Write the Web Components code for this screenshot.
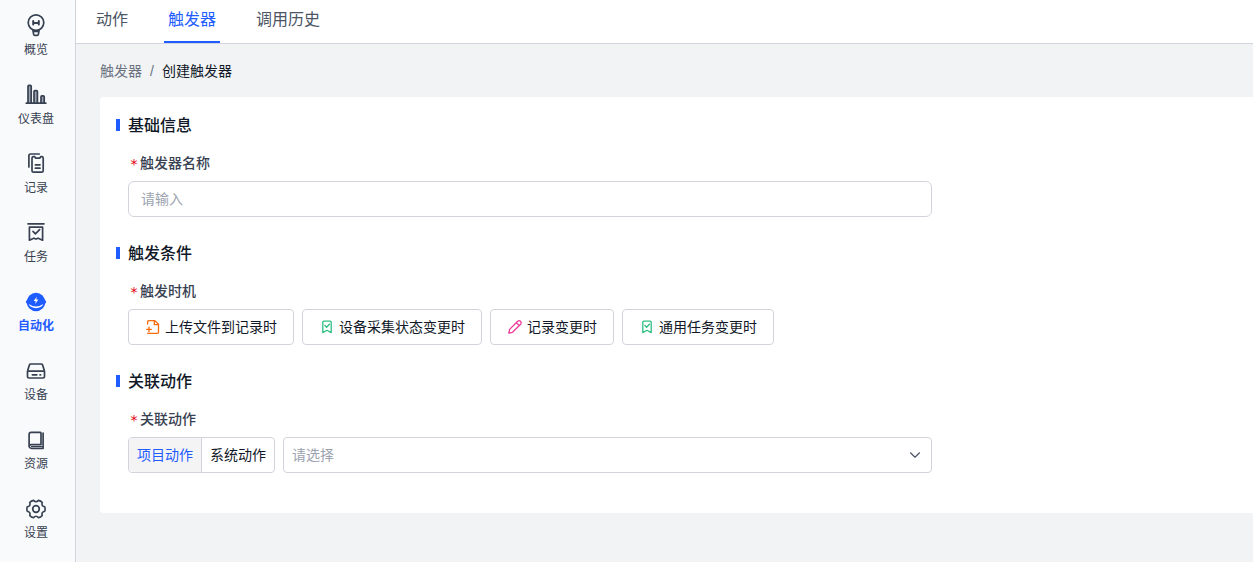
<!DOCTYPE html>
<html lang="zh-CN">
<head>
<meta charset="utf-8">
<title>创建触发器</title>
<style>
  html, body { height: 100%; margin: 0; }
  body {
    --blue: #1f5cff;
    --line: #d1d5db;
    --ink: #111827;
    --body: #374151;
    --muted: #6b7280;
    --hint: #9ca3af;
    --page: #f2f3f5;
    --display: Inter, "Noto Sans CJK SC", sans-serif;
    font: 14px/20px "Liberation Sans", "Noto Sans CJK SC", sans-serif;
    color: var(--ink);
    background: var(--page);
  }
</style>
</head>
<body>
<app-shell>
  <side-nav slot="nav">
    <nav-item icon="bulb">概览</nav-item>
    <nav-item icon="chart">仪表盘</nav-item>
    <nav-item icon="record">记录</nav-item>
    <nav-item icon="task">任务</nav-item>
    <nav-item icon="auto" active>自动化</nav-item>
    <nav-item icon="device">设备</nav-item>
    <nav-item icon="book">资源</nav-item>
    <nav-item icon="gear">设置</nav-item>
  </side-nav>
  <tab-bar slot="tabs">
    <tab-link>动作</tab-link>
    <tab-link active>触发器</tab-link>
    <tab-link>调用历史</tab-link>
  </tab-bar>
  <bread-crumb parent="触发器">创建触发器</bread-crumb>
  <form-card>
    <form-section heading="基础信息">
      <text-field label="触发器名称" placeholder="请输入"></text-field>
    </form-section>
    <form-section heading="触发条件">
      <field-group label="触发时机">
        <option-button icon="upload">上传文件到记录时</option-button>
        <option-button icon="mark">设备采集状态变更时</option-button>
        <option-button icon="pencil">记录变更时</option-button>
        <option-button icon="mark">通用任务变更时</option-button>
      </field-group>
    </form-section>
    <form-section heading="关联动作">
      <field-group label="关联动作">
        <segment-control options="项目动作,系统动作"></segment-control>
        <select-box placeholder="请选择" label="关联动作"></select-box>
      </field-group>
    </form-section>
  </form-card>
</app-shell>

<script>
const ICONS = {
  bulb: `<circle cx="12" cy="9.600" r="7.800"/><path d="M9 17.200l.6 4.100q.2 1 1.200 1h2.400q1 0 1.200-1l.6-4.100M9 18.400h6"/><path stroke-width="2" d="M9.200 8v3.400M14.800 8v3.400M9.200 9.900h5.600"/>`,
  chart: `<g fill="#9ca3af"><path d="M4 21V4.200q0-.9.900-.9h1.400q.9 0 .9.900V21M10 21V9.500q0-.9.900-.9h1.600q.9 0 .9.900V21M17 21v-6.300q0-.9.900-.9h1.400q.9 0 .9.900V21"/></g><path d="M2.300 21.200h19.500"/>`,
  record: `<path d="M4.900 16V4.700q0-1.700 1.700-1.700h8.600"/><path d="M8 7.300q0-1.600 1.500-1.600h1.200l.8 1.400h4.400l.8-1.400h1q1.500 0 1.500 1.600v12.400q0 1.500-1.500 1.500H9.500Q8 21.200 8 19.700zM11.400 13.800h4.600M11.400 17.200h4.600"/>`,
  task: `<path d="M4 3.800h16M5.400 7.200h13.200v13l-3.800-1.800q-.7-.4-1.400 0l-1.400.7-1.400-.7q-.7-.4-1.400 0l-3.800 1.800zM9 11.400l2.400 2.400 4.200-4.200"/>`,
  auto: `<g stroke="none"><circle cx="12" cy="13" r="9.200" fill="currentColor"/><path fill="currentColor" d="M4.500 9L2 12.200q-.3.600 0 1.200L4.500 17zM19.500 9l2.500 3.200q.3.600 0 1.200L19.500 17z"/><path fill="#fff" d="M4.800 15q7.200 5 14.400 0-.6 1.900-2.200 2.800-5 2.800-10 0Q5.400 16.900 4.800 15zM12.700 7.800l-3 4.100h2l-.5 3 3.200-4.300h-2.200z"/></g>`,
  device: `<path d="M6.700 6h10.600q1 0 1.300.9l1.700 5.600q.2.600.2 1.200v4.800q0 1.500-1.500 1.500H5q-1.500 0-1.500-1.500v-4.800q0-.6.2-1.200l1.700-5.600Q5.700 6 6.700 6zM3.800 13.200h16.400M8.400 16.800h4.400M16 16.800h.6"/>`,
  book: `<path d="M7.200 5.300h9.100q.7 0 .7.700v11.600H7.200q-2.100 0-2.100 1.800V7.400q0-2.100 2.100-2.100zM5.100 19q.3 2.300 2.400 2.300h11.600V6.200"/><path stroke-width="1" d="M7.400 19.500h11"/>`,
  gear: `<circle cx="12" cy="13" r="3.300"/><path transform="translate(12 13) scale(.95) translate(-12 -13)" d="M21.200 10.700Q22 13 21.200 15.300Q17.400 16.100 18.600 19.800Q17 21.700 14.600 22.100Q12 19.200 9.400 22.100Q7 21.700 5.400 19.800Q6.600 16.100 2.800 15.300Q2 13 2.800 10.700Q6.600 9.900 5.400 6.200Q7 4.300 9.400 3.900Q12 6.800 14.600 3.900Q17 4.300 18.600 6.200Q17.400 9.900 21.200 10.700z"/>`,
  upload: `<g stroke="#f76b0a"><path d="M2.600 5V2.700q0-1.100 1.100-1.100h6.100l3.700 3.700v7.900q0 1.100-1.100 1.100H2.600M9.300 1.900v3.800h3.900M4 8.100v4.600M1.700 10.400h4.600"/></g>`,
  mark: `<g stroke="#30bf83"><path d="M4.900 2.100h6.200q1.100 0 1.100 1.100v10.400L8 11.300l-4.200 2.300V3.200q0-1.100 1.100-1.100zM5.900 6.500l1.700 1.700 2.800-2.900"/></g>`,
  pencil: `<g stroke="#ee3a9c"><path d="M1.800 14.200l.8-3.800L10.700 2.300q1.500-1.300 2.800 0 1.400 1.400.1 2.900L5.500 13.300zM9.400 3.700l2.900 2.900"/></g>`,
  chevron: `<path d="M3.500 5.800L8 10.200l4.500-4.400"/>`
};
const svg = (name, size, stroke) =>
  `<svg viewBox="0 0 ${size} ${size}" width="${size}" height="${size}" fill="none" stroke="currentColor" stroke-width="${stroke}" stroke-linecap="round" stroke-linejoin="round" aria-hidden="true">${ICONS[name]}</svg>`;

const LABEL_CSS = `
  .label { display: flex; height: 20px; margin-bottom: 8px; padding: 0; font-weight: 500; color: var(--body); }
  .star { width: 12px; box-sizing: border-box; padding-top: 1px; text-align: center; font-family: "DejaVu Sans", sans-serif; font-weight: 400; color: #e7000b; }
`;

/* Registers an element whose open shadow root is filled from its own markup. */
function component(tag, css, markup) {
  customElements.define(tag, class extends HTMLElement {
    constructor() {
      super();
      this.attachShadow({ mode: "open" });
    }
    connectedCallback() {
      const t = document.createElement("template");
      t.innerHTML = `<style>${css}</style>${markup(this)}`;
      this.shadowRoot.replaceChildren(t.content.cloneNode(true));
    }
  });
}

component("app-shell", `
  :host { display: flex; min-height: 100%; }
  .page { flex: 1; min-width: 0; }
  main { padding: 17px 0 24px 24px; }
`, () => `<slot name="nav"></slot><div class="page"><slot name="tabs"></slot><main><slot></slot></main></div>`);

component("side-nav", `
  :host { display: block; background: #f9fafc; border-right: 1px solid var(--line); padding: 13px 3px 20px 0; }
  nav { display: flex; flex-direction: column; gap: 25px; width: 72px; }
`, () => `<nav><slot></slot></nav>`);

component("nav-item", `
  :host { display: block; }
  a { display: flex; flex-direction: column; align-items: center; gap: 4px; font-family: "Noto Sans CJK SC", sans-serif; font-size: 12px; line-height: 16px; color: var(--body); text-decoration: none; }
  :host([active]) a { color: var(--blue); font-weight: 700; }
  svg { display: block; }
`, el => `<a href="#">${svg(el.getAttribute("icon"), 24, 1.7)}<span><slot></slot></span></a>`);

component("tab-bar", `
  :host { display: block; background: #fff; border-bottom: 1px solid var(--line); }
  nav { display: flex; gap: 32px; padding: 0 16px; }
`, () => `<nav><slot></slot></nav>`);

component("tab-link", `
  :host { display: block; }
  a { display: block; padding: 7px 4px 10px; border-bottom: 2px solid transparent; font-family: var(--display); font-size: 16px; line-height: 24px; color: #4b5563; text-decoration: none; }
  :host([active]) a { color: var(--blue); border-color: var(--blue); }
`, () => `<a href="#"><slot></slot></a>`);

component("bread-crumb", `
  :host { display: block; margin-bottom: 16px; }
  nav { display: flex; gap: 8px; }
  a { color: var(--muted); text-decoration: none; }
  .sep { color: var(--muted); }
`, el => `<nav><a href="#">${el.getAttribute("parent")}</a><span class="sep">/</span><span><slot></slot></span></nav>`);

component("form-card", `
  :host { display: block; background: #fff; border-radius: 4px 0 0 4px; padding: 16px; }
  form { max-width: 816px; }
`, () => `<form><slot></slot></form>`);

component("form-section", `
  :host { display: block; padding-bottom: 24px; }
  h2 { display: flex; align-items: center; gap: 8px; margin: 0 0 16px; font-family: var(--display); font-size: 16px; line-height: 24px; font-weight: 500; }
  h2::before { content: ""; width: 4px; height: 12px; background: var(--blue); }
  .body { padding-left: 12px; }
`, el => `<section><h2>${el.getAttribute("heading")}</h2><div class="body"><slot></slot></div></section>`);

component("text-field", LABEL_CSS + `
  :host { display: block; }
  input { display: block; box-sizing: border-box; width: 100%; height: 36px; padding: 0 12px; border: 1px solid var(--line); border-radius: 6px; background: #fff; font: inherit; color: inherit; }
  input::placeholder { color: var(--hint); opacity: 1; }
`, el => `<label class="label" for="control"><span class="star">*</span>${el.getAttribute("label")}</label>
  <input id="control" type="text" placeholder="${el.getAttribute("placeholder")}">`);

component("field-group", LABEL_CSS + `
  :host { display: block; }
  .row { display: flex; flex-wrap: wrap; gap: 8px; }
`, el => `<div role="group" aria-labelledby="name"><div class="label" id="name"><span class="star">*</span>${el.getAttribute("label")}</div>
  <div class="row"><slot></slot></div></div>`);

component("option-button", `
  :host { display: block; }
  button { display: flex; align-items: center; gap: 4px; height: 36px; padding: 0 16px; border: 1px solid var(--line); border-radius: 4px; background: #fff; font: inherit; color: inherit; white-space: nowrap; }
`, el => `<button type="button">${svg(el.getAttribute("icon"), 16, 1.3)}<span><slot></slot></span></button>`);

component("segment-control", `
  :host { display: flex; box-sizing: border-box; height: 36px; border: 1px solid var(--line); border-radius: 4px; background: #fff; overflow: hidden; }
  button { padding: 0 8px; border: 0; background: none; font: inherit; color: inherit; white-space: nowrap; }
  button + button { border-left: 1px solid var(--line); }
  button[aria-pressed=true] { background: #f4f4f5; color: var(--blue); }
`, el => el.getAttribute("options").split(",").map((text, i) => `<button type="button" aria-pressed="${i === 0}">${text}</button>`).join(""));

component("select-box", `
  :host { display: grid; flex: 1; align-items: center; min-width: 160px; }
  select, svg { grid-area: 1 / 1; }
  select { appearance: none; box-sizing: border-box; width: 100%; height: 36px; padding: 0 32px 0 8px; border: 1px solid var(--line); border-radius: 4px; background: #fff; font: inherit; color: var(--hint); }
  svg { justify-self: end; margin-right: 9px; color: #4b5563; pointer-events: none; }
`, el => `<select aria-label="${el.getAttribute("label")}"><option>${el.getAttribute("placeholder")}</option></select>${svg("chevron", 16, 1.2)}`);
</script>
</body>
</html>
